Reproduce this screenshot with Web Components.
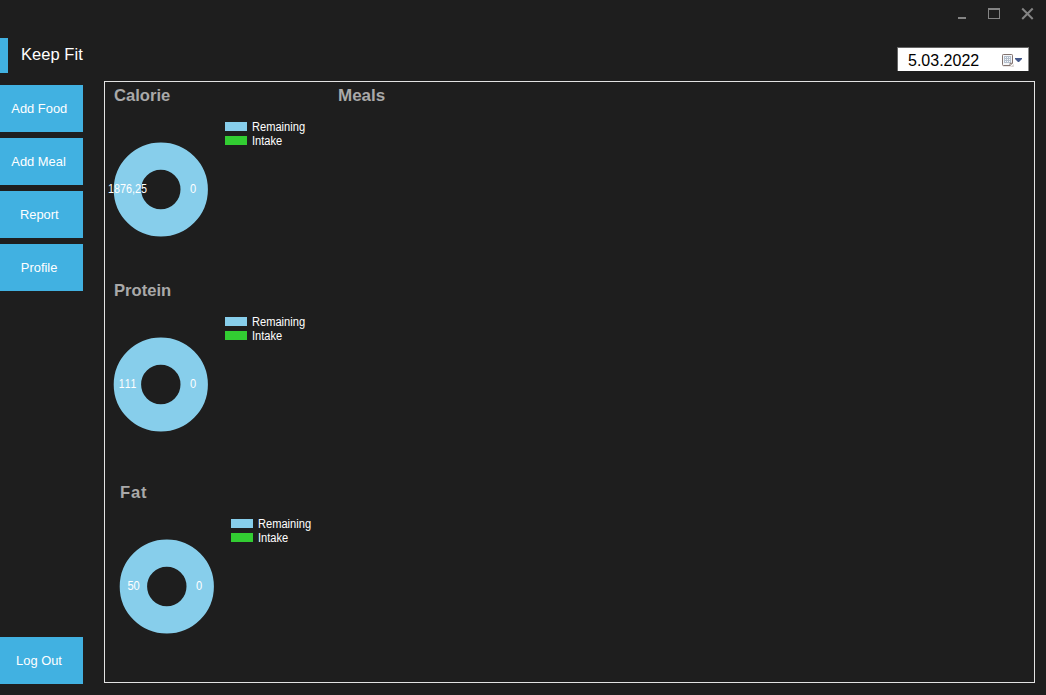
<!DOCTYPE html>
<html lang="en">
<head>
<meta charset="utf-8">
<title>Keep Fit</title>
<style>
  html, body { margin: 0; height: 100%; background: #1e1e1e; overflow: hidden; }
  body { font-family: "Liberation Sans", Arial, sans-serif; font-kerning: none; color: #fff; }
</style>
</head>
<body>
<keep-fit-app></keep-fit-app>
<script>
const define = (name, html, setup) => {
  const tpl = document.createElement('template');
  tpl.innerHTML = html;
  customElements.define(name, class extends HTMLElement {
    constructor() {
      super();
      this.attachShadow({ mode: 'open' }).append(tpl.content.cloneNode(true));
    }
    connectedCallback() { if (setup) setup(this, this.shadowRoot); }
  });
};

define('window-controls', `
  <style>
    :host { display: flex; justify-content: flex-end; height: 28px; }
    svg { display: block; }
  </style>
  <svg width="96" height="28" viewBox="0 0 96 28" fill="none" stroke="#848484" shape-rendering="crispEdges">
    <path d="M8 18H16" stroke-width="2"/>
    <path d="M38.5 8.5H49.5V18.5H38.5Z"/><path d="M38 9H50" stroke-width="2"/>
    <path d="M72.2 8.5L82.7 19M82.7 8.5L72.2 19" stroke-width="2" shape-rendering="auto"/>
  </svg>`);

define('date-field', `
  <style>
    :host { display: flex; align-items: flex-start; box-sizing: border-box; width: 132px; height: 24px;
      padding: 3px 6px 0 10px; border: 1px solid #646464; border-right-color: #8a8a8a; border-bottom: 0;
      background: #fff; color: #000; font-size: 16px; line-height: 20px; }
    span { flex: 1; white-space: nowrap; }
    svg { display: block; margin-top: 3px; }
  </style>
  <span><slot></slot></span>
  <svg width="20" height="14" viewBox="0 0 20 14">
    <path d="M1 12.5H9L11.8 10V13H1Z" fill="#d8d2d0"/>
    <path d="M.5 1.3Q.5 .5 1.3 .5H9.7Q10.5 .5 10.5 1.3V9.3L8 11.5H1.3Q.5 11.5 .5 10.7Z" fill="#f4f6f9" stroke="#82736f"/>
    <path d="M2 2H9V9H2Z" fill="#b4bfcc"/>
    <path d="M3 3H4V4H3ZM5 3H6V4H5ZM7 3H8V4H7ZM3 5H4V6H3ZM5 5H6V6H5ZM7 5H8V6H7ZM3 7H4V8H3ZM5 7H6V8H5ZM7 7H8V8H7Z" fill="#f4f7fb"/>
    <path d="M8 11.5V9.3H10.5" fill="#fff" stroke="#82736f"/>
    <path d="M13 4H20V5L17 8H16L13 5Z" fill="#44598b"/>
  </svg>`);

define('side-button', `
  <style>
    :host { display: block; height: 47px; }
    button { display: block; width: 100%; height: 100%; margin: 0; border: 0; padding: 0 5px 0 0;
      background: #41b1e1; color: #fff; font: inherit; font-size: 13.5px; line-height: 15px; font-kerning: none; white-space: nowrap; }
    span { display: inline-block; transform: scaleX(.955); }
  </style>
  <button type="button"><span><slot></slot></span></button>`);

define('app-header', `
  <style>
    :host { display: flex; height: 43px; margin-top: 10px; padding-right: 17px; align-items: flex-start; }
    i { width: 8px; height: 35px; background: #41b1e1; }
    h1 { flex: 1; margin: 0; padding: 6px 0 0 13px; font-weight: 400; font-size: 16.5px; line-height: 20px; letter-spacing: .05px; }
    date-field { margin-top: 9px; }
  </style>
  <i></i><h1><slot></slot></h1><date-field>5.03.2022</date-field>`);

define('donut-chart', `
  <style>
    :host { display: block; color: #fff; }
    h2 { margin: 0; padding-top: 1px; height: 23px; font-size: 16.6px; font-weight: 700; line-height: 20px; color: #a9a9a9; }
    :host(.inset) h2 { letter-spacing: .8px; }
    .row { display: flex; align-items: flex-start; }
    .ring { display: block; margin-top: 33px; overflow: visible; }
    text { font-size: 12px; fill: #fff; text-anchor: middle; }
    ul { list-style: none; margin: 11px 0 0 16px; padding: 0; font-size: 12px; }
    li { display: flex; align-items: flex-start; height: 14px; line-height: 14px; }
    span { transform: scaleX(.925); transform-origin: 0 50%; }
    b { width: 22px; height: 9px; margin: 2px 5px 0 0; background: #87ceeb; }
    b.in { background: #32cd32; }
  </style>
  <h2></h2>
  <div class="row">
    <svg class="ring" width="95" height="95" viewBox="0 0 95 95">
      <circle cx="46.8" cy="47.5" r="33.4" fill="none" stroke="#87ceeb" stroke-width="27.4"/>
      <text class="rest" x="13.6" y="51" lengthAdjust="spacingAndGlyphs"></text>
      <text class="taken" x="79.1" y="51" textLength="6.2" lengthAdjust="spacingAndGlyphs"></text>
    </svg>
    <ul><li><b></b><span>Remaining</span></li><li><b class="in"></b><span>Intake</span></li></ul>
  </div>`, (el, root) => {
  root.querySelector('h2').textContent = el.getAttribute('label');
  const rest = root.querySelector('.rest');
  rest.textContent = el.getAttribute('remaining');
  rest.setAttribute('textLength', el.getAttribute('span'));
  root.querySelector('.taken').textContent = el.getAttribute('intake');
});

define('meal-list', `
  <style>
    :host { display: block; }
    h2 { margin: 0; padding-top: 1px; font-size: 17px; font-weight: 700; line-height: 20px; color: #a9a9a9; }
  </style>
  <h2>Meals</h2>`);

define('keep-fit-app', `
  <style>
    :host { display: flex; flex-direction: column; box-sizing: border-box; width: 1046px; height: 695px; background: #1e1e1e; }
    .body { display: flex; gap: 21px; }
    nav { display: flex; flex-direction: column; gap: 6px; width: 83px; height: 599px; padding-top: 4px; }
    .out { margin-top: auto; }
    main { display: grid; grid-template-columns: 224px 1fr; box-sizing: border-box; width: 931px; height: 602px;
      border: 1px solid #e3e3e3; padding: 3px 0 0 9px; }
    .charts { display: grid; grid-template-rows: 195px 202px 190px; }
    .inset { margin-left: 6px; }
  </style>
  <window-controls></window-controls>
  <app-header>Keep Fit</app-header>
  <div class="body">
    <nav>
      <side-button>Add Food</side-button>
      <side-button>Add Meal</side-button>
      <side-button>Report</side-button>
      <side-button>Profile</side-button>
      <side-button class="out">Log Out</side-button>
    </nav>
    <main>
      <div class="charts">
        <donut-chart label="Calorie" remaining="1876,25" span="39" intake="0"></donut-chart>
        <donut-chart label="Protein" remaining="111" span="17.5" intake="0"></donut-chart>
        <donut-chart class="inset" label="Fat" remaining="50" span="12.4" intake="0"></donut-chart>
      </div>
      <meal-list></meal-list>
    </main>
  </div>`);
</script>
</body>
</html>
